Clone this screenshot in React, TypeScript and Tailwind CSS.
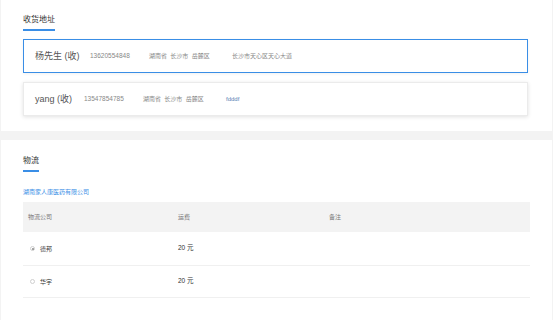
export default function App() {
  const addresses = [
    { name: '杨先生 (收)', phone: '13620554848', region: '湖南省  长沙市  岳麓区', detail: '长沙市天心区天心大道', active: true },
    { name: 'yang (收)', phone: '13547854785', region: '湖南省  长沙市  岳麓区', detail: 'fdddf', active: false },
  ];
  const rows = [
    { name: '德邦', fee: '20 元', checked: true },
    { name: '华宇', fee: '20 元', checked: false },
  ];

  return (
    <div
      className="min-h-screen w-[553px] bg-[#f3f3f3] px-px"
      style={{ fontFamily: '"Liberation Sans", "Noto Sans CJK SC", sans-serif' }}
    >
      {/* 收货地址 */}
      <div className="bg-white pl-[22px] pr-[23px] pt-[14px] pb-[15px]">
        <div className="w-fit border-b-2 border-[#3a8ee6] pb-[3px] text-[8px] leading-[12px] text-[#333]">
          收货地址
        </div>
        <div className="mt-[8px] flex flex-col gap-[9px] pr-[1px]">
          {addresses.map((a) => (
            <div
              key={a.phone}
              className={`flex h-[34px] items-center pl-[11px] leading-none ${
                a.active
                  ? 'border border-[#3a8ee6] shadow-[0_1px_3px_rgba(0,0,0,0.06)]'
                  : 'border border-[#ebebeb] shadow-[0_1px_4px_rgba(0,0,0,0.12)]'
              }`}
            >
              <span className={`text-[9px] text-[#555] ${a.active ? 'w-[55px]' : 'w-[49px]'}`}>{a.name}</span>
              <span className="w-[59px] text-[6.5px] text-[#888]">{a.phone}</span>
              <span className="w-[83px] whitespace-pre text-[6px] text-[#888]">{a.region}</span>
              <span className={`text-[6px] ${a.active ? 'text-[#888]' : 'text-[#5a7fb5]'}`}>{a.detail}</span>
            </div>
          ))}
        </div>
      </div>

      {/* 物流 */}
      <div className="mt-[9px] bg-white pl-[22px] pr-[22px] pt-[15px] pb-[30px]">
        <div className="w-fit border-b-2 border-[#3a8ee6] pb-[3px] text-[8px] leading-[12px] text-[#333]">
          物流
        </div>
        <div className="mt-[16px] text-[6px] leading-[9px] text-[#3a8ee6]">湖南家人康医药有限公司</div>
        <div className="mt-[5px]">
          <div className="flex h-[30px] items-center bg-[#f3f3f3] pl-[5px] text-[6px] leading-none text-[#777]">
            <span className="w-[150px]">物流公司</span>
            <span className="w-[151px]">运费</span>
            <span>备注</span>
          </div>
          {rows.map((r, i) => (
            <div
              key={r.name}
              className={`flex items-center border-b border-[#f0f0f0] pl-[5px] text-[6px] leading-none text-[#333] ${
                i === 0 ? 'h-[34px]' : 'h-[32px]'
              }`}
            >
              <span className="flex w-[150px] items-center">
                <span className="ml-[2px] mr-[5px] flex h-[5px] w-[5px] items-center justify-center rounded-full border border-[#cfcfcf] bg-white">
                  {r.checked && <span className="h-[2px] w-[2px] rounded-full bg-[#888]" />}
                </span>
                {r.name}
              </span>
              <span className="w-[151px] text-[6.5px]">{r.fee}</span>
              <span></span>
            </div>
          ))}
        </div>
      </div>
    </div>
  );
}
